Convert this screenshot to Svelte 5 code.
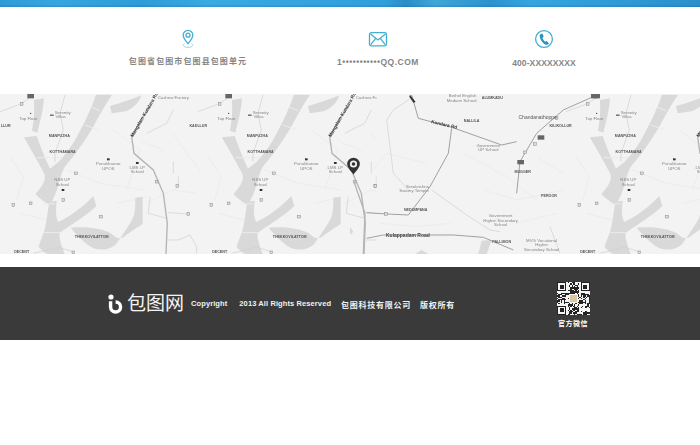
<script>
  // pseudo random qr modules, finder squares are drawn on top
  const qrSize = 25;
  const cells = [];
  let seed = 7;
  for (let y = 0; y < qrSize; y++) {
    for (let x = 0; x < qrSize; x++) {
      seed = (seed * 1103515245 + 12345) & 0x7fffffff;
      const inFinder = (x < 8 && y < 8) || (x > 16 && y < 8) || (x < 8 && y > 16);
      if (!inFinder && (seed >> 16) % 100 < 52) cells.push({ x, y });
    }
  }
  const finders = [[0, 0], [18, 0], [0, 18]];

  const contacts = [
    { icon: 'pin', text: '包图省包图市包图县包图单元', cls: 'addr' },
    { icon: 'mail', text: '1•••••••••••QQ.COM', cls: 'mailtext' },
    { icon: 'phone', text: '400-XXXXXXXX', cls: 'tel' }
  ];

  // river shapes of the repeating map tile, in 3x tile units
  const rivers = [
    'M288 14 C276 50 258 90 236 130 C221 160 201 190 176 215 L150 236 C135 205 122 170 110 138 L72 142 C88 172 113 212 132 250 C142 270 122 295 106 312 C122 328 138 338 148 346 C180 300 176 258 196 228 C231 188 261 143 281 108 C296 78 316 45 336 14 Z',
    'M148 335 L138 400 C133 430 118 460 116 470 C128 487 143 492 148 494 L194 494 C187 470 174 442 180 428 C207 408 259 378 289 348 L280 318 C252 348 207 383 174 396 C167 380 167 360 170 332 Z',
    'M212 413 C260 408 312 416 332 430 C347 443 352 448 370 442 C388 428 403 418 428 402 L428 320 L406 323 C406 355 406 375 393 395 C378 420 360 445 347 464 C320 484 290 482 268 468 C248 453 228 433 212 413 Z',
    'M330 48 C360 40 395 28 424 16 C417 40 397 57 377 64 L335 70 Z',
    'M102 30 L132 25 C130 60 120 95 112 128 L96 122 C102 90 104 60 102 30 Z'
  ];
  const whites = ['M112 203 L188 203', 'M270 50 L300 62', 'M255 105 L300 122', 'M128 342 L165 342', 'M130 428 L180 428'];
  const faint = [
    'M60 370 L170 398', 'M30 200 L70 260 L50 330', 'M340 120 L420 180 L380 300',
    'M200 240 L300 280 L430 300', 'M420 150 C450 175 470 160 495 190',
    'M440 340 L520 300 L590 310', 'M350 340 L440 320', 'M520 130 L560 190 L600 240'
  ];
  const thin = [
    'M0 65 L62 42 L92 22', 'M195 15 L180 70 L190 120 L165 190 L165 215',
    'M100 490 L175 472 L220 485', 'M505 368 L565 372', 'M505 450 L535 450 L570 435 L590 470 L590 490',
    'M450 320 L445 370 L500 385', 'M520 60 L500 100 L440 130',
    'M535 260 L535 290', 'M520 215 L520 250'
  ];
  const squares = [
    [228, 250], [40, 345], [92, 340], [190, 330], [303, 380], [470, 275], [532, 288],
    [565, 372], [220, 487], [65, 42]
  ];
  const labels = [
    [85, 90, 'Top Floor'], [188, 72, 'Serenity'], [182, 85, 'Villas'],
    [325, 226, 'Punukkaroor'], [325, 239, 'UPOS'], [412, 236, 'LMS LP'], [412, 250, 'School'],
    [187, 274, 'NSS UP'], [187, 288, 'School'], [520, 26, 'Cashew Factory']
  ];
  const boldLabels = [
    [178, 140, 'MANPUZHA'], [188, 190, 'KOTTHAMARA'], [275, 445, 'THEKKOVILATTOM'],
    [65, 488, 'DECENT'], [595, 112, 'KADLLUR']
  ];

  // the part of the map which does not repeat, same 3x units
  const midRoads = [
    'M185 15 L205 85 L300 110 L455 165 L500 155',
    'M305 115 L295 190 L240 290 L175 375 L110 372 L50 368',
    'M50 445 L100 435 L310 435 L400 442 L490 480',
    'M730 20 L640 60 L560 130 L510 215 L500 310'
  ];
  const midThin = [
    'M130 60 L110 90 L130 250 L175 300', 'M245 300 L350 375 L420 420 L450 425',
    'M600 410 L630 490', 'M190 20 L130 60'
  ];
  const midFaint = [
    'M60 250 L110 190 L230 220', 'M340 190 L470 260 L560 330', 'M400 300 L500 330 L640 300',
    'M560 200 L640 250', 'M90 400 L200 410 L300 400', 'M500 400 L620 370'
  ];
  const midSquares = [[76, 288], [108, 372], [620, 84], [555, 162], [525, 187]];
  const midLabels = [
    [338, 22, 'Bethel English'], [335, 35, 'Medium School'], [415, 170, 'Government'], [415, 184, 'UP School'],
    [203, 293, 'Sreekrishna'], [192, 307, 'Swamy Temple'],
    [452, 381, 'Government'], [452, 395, 'Higher Secondary'], [452, 409, 'School'],
    [575, 456, 'MVG Vocational'], [575, 469, 'Higher'], [575, 482, 'Secondary School']
  ];
  const midBold = [
    [365, 97, 'NALLILA'], [427, 28, 'ALUMKADU'], [632, 110, 'KILIKOLLUR'], [518, 248, 'MUGGER'],
    [197, 364, 'NEDUMPANA'], [597, 320, 'PEROOR'], [455, 459, 'PALLIMON']
  ];
</script>

<div class="page">
  <div class="banner"></div>

  <section class="contacts">
    {#each contacts as c}
      <div class="contact {c.cls}">
        {#if c.icon === 'pin'}
          <svg class="icon" width="20" height="20" viewBox="0 0 20 20">
            <path d="M10 14.6 C7.6 11.6 5.2 9.2 5.2 6.2 A4.8 4.8 0 0 1 14.8 6.2 C14.8 9.2 12.4 11.6 10 14.6 Z" />
            <circle cx="10" cy="6.2" r="2" />
            <path class="soft" d="M6.4 14.6 C3.8 16.8 6.6 18.4 10 18.4 C13.4 18.4 16.2 16.8 13.6 14.6" />
          </svg>
        {:else if c.icon === 'mail'}
          <svg class="icon" width="20" height="20" viewBox="0 0 20 20">
            <rect x="1.5" y="3.6" width="17" height="13.2" rx="1.8" />
            <path d="M2.6 5 L10 11 L17.4 5 M2.8 15.6 L7.6 9.4 M17.2 15.6 L12.4 9.4" />
          </svg>
        {:else}
          <svg class="icon" width="20" height="20" viewBox="0 0 20 20">
            <circle cx="10" cy="10" r="8.4" />
            <path class="solid" d="M6.8 4.9 L8.3 4.4 L9.7 7.6 L8.5 8.7 C8.9 10.3 9.9 11.7 11.2 12.7 L12.7 12 L15 14.4 L13.8 15.5 C12.6 16 11 15.6 9.4 14.2 C7.2 12.2 5.6 9.4 5.7 6.6 C5.8 5.8 6.2 5.2 6.8 4.9 Z" />
          </svg>
        {/if}
        <p>{c.text}</p>
      </div>
    {/each}
  </section>

  <section class="map">
    <svg class="mapsvg" width="700" height="160" viewBox="0 0 700 160">
      <defs>
        <g id="tile">
          {#each faint as d}<path class="faintroad" {d} />{/each}
          {#each rivers as d}<path class="river" {d} />{/each}
          {#each whites as d}<path class="whiteroad" {d} />{/each}
          {#each thin as d}<path class="thinroad" {d} />{/each}
          <path class="mainroad" d="M452 50 L425 85 L395 140 L402 190 L460 240 L490 310 L502 400 L498 492" />
          <rect class="badge" x="82" y="12" width="20" height="13" />
          {#each squares as [x, y]}<rect class="sq" x={x - 4} y={y - 4} width="8" height="8" />{/each}
          <circle class="dot" cx="92" cy="70" r="2" />
          <rect class="dot" x="150" y="74" width="11" height="3" />
          <rect class="dot" x="321" y="205" width="8" height="6" />
          <rect class="dot" x="408" y="216" width="8" height="6" />
          <rect class="dot" x="185" y="297" width="8" height="6" />
          {#each labels as [x, y, t]}<text class="lbl" {x} {y}>{t}</text>{/each}
          {#each boldLabels as [x, y, t]}<text class="lbl strong" {x} {y}>{t}</text>{/each}
          <text class="lbl road" transform="translate(399 142) rotate(-60)">Mangalam Kundara Rd</text>
        </g>
      </defs>
      <g transform="translate(0 -4) scale(.3333)">
        <use href="#tile" />
        <text class="lbl strong" x="17" y="112">LLUR</text>
      </g>
      <g transform="translate(198 -4) scale(.3333)">
        <use href="#tile" />
      </g>
      <g transform="translate(566 -4) scale(.3333)">
        <use href="#tile" />
      </g>
      <g transform="translate(350 -4) scale(.3333)">
        <rect class="ground" x="80" y="0" width="560" height="500" />
        {#each midFaint as d}<path class="faintroad" {d} />{/each}
        <path class="mainroad" d="M10 270 L45 370 L40 492" />
        <path class="river" d="M385 492 L395 452 L425 450 L410 492 Z M195 492 L215 480 L235 492 Z M0 410 L10 425 L0 435 Z" />
        {#each midThin as d}<path class="thinroad" {d} />{/each}
        {#each midRoads as d}<path class="mainroad slim" {d} />{/each}
        <rect class="badge" x="723" y="12" width="20" height="13" />
        <rect class="badge" x="563" y="136" width="20" height="13" />
        <rect class="badge" x="502" y="210" width="20" height="13" />
        <path class="dot" d="M180 14 L197 36 L190 38 L178 20 Z" />
        {#each midSquares as [x, y]}<rect class="sq" x={x - 4} y={y - 4} width="8" height="8" />{/each}
        {#each midLabels as [x, y, t]}<text class="lbl" {x} {y}>{t}</text>{/each}
        {#each midBold as [x, y, t]}<text class="lbl strong" {x} {y}>{t}</text>{/each}
        <text class="lbl big" x="563" y="88">Chandanathoppe</text>
        <text class="lbl road" transform="translate(243 99) rotate(13)">Kundara Rd</text>
        <text class="lbl road plain" x="108" y="441">Kulappadam Road</text>
      </g>
      <g class="mappin">
        <path d="M353.5 80.5 C350.6 76.6 347.2 73.6 347.2 70 A6.3 6.3 0 0 1 359.8 70 C359.8 73.6 356.4 76.6 353.5 80.5 Z" />
        <circle class="hole" cx="353.5" cy="70" r="3.6" />
        <circle cx="353.5" cy="70" r="1.8" />
      </g>
    </svg>
  </section>

  <footer>
    <div class="brand">
      <svg class="logo" width="15" height="20" viewBox="0 0 15 20">
        <circle cx="3" cy="3" r="2.6" />
        <path d="M2.6 7.2 V13 A5 5 0 1 0 7.6 8" />
      </svg>
      <span>包图网</span>
    </div>
    <div class="legal">
      <span class="c1">Copyright</span>
      <span class="c2">2013 All Rights Reserved</span>
      <span class="c3">包图科技有限公司</span>
      <span class="c4">版权所有</span>
    </div>
    <div class="wechat">
      <svg width="33" height="33" viewBox="0 0 25 25" shape-rendering="crispEdges">
        <rect class="qrbg" width="25" height="25" />
        {#each cells as c}<rect class="qrcell" x={c.x} y={c.y} width="1" height="1" />{/each}
        {#each finders as [x, y]}
          <rect class="qrcell" {x} {y} width="7" height="7" />
          <rect class="qrbg" x={x + 1} y={y + 1} width="5" height="5" />
          <rect class="qrcell" x={x + 2} y={y + 2} width="3" height="3" />
        {/each}
        <rect class="qrbg" x="9" y="9" width="7" height="7" />
        <rect class="qrmid" x="10" y="10" width="5" height="5" />
      </svg>
      <span>官方微信</span>
    </div>
  </footer>
</div>

<style>
  :global(body) {
    background: #fff;
  }
  .page {
    width: 700px;
    height: 445px;
    overflow: hidden;
    font-family: "Liberation Sans", "Noto Sans CJK SC", sans-serif;
  }
  .banner {
    height: 7px;
    background:
      linear-gradient(180deg, rgba(255, 255, 255, 0) 60%, rgba(0, 60, 120, .18) 100%),
      linear-gradient(90deg, #2f9bd6 0%, #36a6e0 8%, #2d9cd8 20%, #3ba9e2 30%, #2f9fdc 55%, #2a8cc8 58%, #3fa6d8 62%, #2c93cf 70%, #35a5e0 76%, #2f9bd6 88%, #2a90cc 100%);
  }
  .contacts {
    height: 87px;
    padding-left: 100px;
    display: grid;
    grid-template-columns: 176px 204px 128px;
  }
  .contact {
    display: flex;
    flex-direction: column;
    align-items: center;
    padding-top: 22px;
  }
  .contact p {
    margin: 7px 0 0;
    font-size: 8.5px;
    line-height: 12px;
    font-weight: 700;
    color: #868686;
    white-space: nowrap;
  }
  .addr p {
    font-size: 8px;
    letter-spacing: 1.1px;
    margin-top: 7px;
  }
  .mailtext p {
    letter-spacing: .5px;
    margin-top: 7px;
  }
  .tel p {
    letter-spacing: .1px;
    font-size: 8.5px;
    margin-top: 8px;
  }
  .icon {
    display: block;
    fill: none;
    stroke: #44add2;
    stroke-width: 1.3;
  }
  .icon .soft {
    stroke: #9fd3e6;
    stroke-width: 1;
  }
  .icon .solid {
    fill: #2b93bd;
    stroke: none;
  }

  .map {
    height: 160px;
    background: #f3f3f3;
    overflow: hidden;
  }
  .mapsvg {
    display: block;
    filter: blur(.45px);
  }
  .ground {
    fill: #f3f3f3;
  }
  .river {
    fill: #d9d9d9;
    stroke: none;
  }
  .whiteroad {
    fill: none;
    stroke: #ececec;
    stroke-width: 3;
  }
  .faintroad {
    fill: none;
    stroke: #e9e9e9;
    stroke-width: 2;
  }
  .thinroad {
    fill: none;
    stroke: #cfcfcf;
    stroke-width: 2;
  }
  .mainroad {
    fill: none;
    stroke: #b4b4b4;
    stroke-width: 4;
  }
  .mainroad.slim {
    stroke-width: 3;
    stroke: #a0a0a0;
  }
  .badge {
    fill: #666;
  }
  .sq {
    fill: #ddd;
    stroke: #888;
    stroke-width: 1.5;
  }
  .dot {
    fill: #333;
  }
  .lbl {
    font-size: 13px;
    fill: #858585;
    text-anchor: middle;
  }
  .lbl.big {
    font-size: 15px;
    fill: #555;
  }
  .lbl.strong {
    font-size: 11px;
    font-weight: 700;
    fill: #555;
  }
  .lbl.road {
    font-size: 14px;
    font-weight: 700;
    fill: #333;
    text-anchor: start;
  }
  .lbl.road.plain {
    font-size: 15px;
    fill: #444;
  }
  .mappin {
    fill: #333;
  }
  .mappin .hole {
    fill: #f3f3f3;
  }

  footer {
    margin-top: 13px;
    height: 73px;
    background: #3a3a3a;
    color: #fff;
    display: flex;
    align-items: center;
    padding: 0 107px 0 108px;
  }
  .brand {
    display: flex;
    align-items: center;
    gap: 4px;
    margin-right: 7px;
  }
  .brand span {
    font-size: 19px;
    line-height: 22px;
    font-weight: 400;
    color: #f4f4f4;
  }
  .logo {
    display: block;
    fill: #fff;
    stroke: none;
  }
  .logo path {
    fill: none;
    stroke: #fff;
    stroke-width: 3.4;
  }
  .legal {
    display: flex;
    font-size: 7.5px;
    font-weight: 700;
    letter-spacing: .1px;
    color: #f2f2f2;
    white-space: nowrap;
    padding-top: 1px;
  }
  .c1 {
    margin-right: 12px;
  }
  .c2 {
    margin-right: 10px;
  }
  .c3 {
    margin-right: 9px;
    font-size: 8px;
    letter-spacing: .75px;
  }
  .c4 {
    font-size: 8px;
    letter-spacing: .75px;
  }
  .wechat {
    margin-left: auto;
    width: 40px;
    display: flex;
    flex-direction: column;
    align-items: center;
    gap: 3px;
    font-size: 7px;
    font-weight: 700;
    letter-spacing: .5px;
    padding-top: 2px;
  }
  .wechat svg {
    display: block;
  }
  .qrbg {
    fill: #f4f4f4;
  }
  .qrcell {
    fill: #222;
  }
  .qrmid {
    fill: #d9c7a0;
  }
</style>
